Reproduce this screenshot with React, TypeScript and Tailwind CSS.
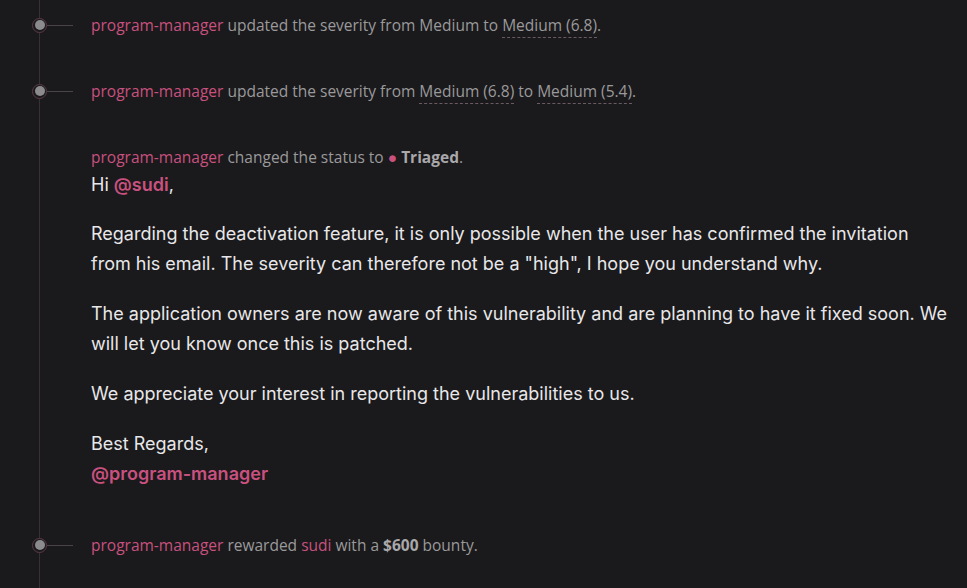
import React from "react";

const pink = "text-[#c9517f]";

function Marker() {
  return (
    <div className="flex items-center -ml-[8px] mr-[18px] shrink-0">
      <div className="w-[15px] h-[15px] rounded-full border border-[#5a3a4a] bg-[#1a191b] flex items-center justify-center">
        <div className="w-[10px] h-[10px] rounded-full bg-[#8b8b8d]" />
      </div>
      <div className="w-[26px] h-px bg-[#4a4448]" />
    </div>
  );
}

function Val({ children }: { children: React.ReactNode }) {
  return (
    <span className="border-b border-dashed border-[#6a5a62] pb-[1px]">{children}</span>
  );
}

function StatusRow({ children, marker = true }: { children: React.ReactNode; marker?: boolean }) {
  return (
    <div className={`flex items-center h-[20px] ${marker ? "" : "pl-[51px]"}`}>
      {marker && <Marker />}
      <div
        className="text-[15.5px] leading-[20px] text-[#9a999b] whitespace-nowrap"
        style={{ fontFamily: '"Open Sans", "Noto Sans", sans-serif' }}
      >
        {children}
      </div>
    </div>
  );
}

export default function App() {
  return (
    <div className="w-[967px] h-[588px] overflow-hidden bg-[#1a191b]">
      <div className="ml-[39px] h-full border-l border-[#3b2f36] pt-[15px] flex flex-col">
        <StatusRow>
          <span className={pink}>program-manager</span> updated the severity from Medium to{" "}
          <Val>Medium (6.8)</Val>.
        </StatusRow>
        <div className="h-[46px]" />
        <StatusRow>
          <span className={pink}>program-manager</span> updated the severity from{" "}
          <Val>Medium (6.8)</Val> to <Val>Medium (5.4)</Val>.
        </StatusRow>
        <div className="h-[46px]" />
        <StatusRow marker={false}>
          <span className={pink}>program-manager</span> changed the status to{" "}
          <span className="text-[#c9517f]">●</span>{" "}
          <span className="font-bold text-[#a9a8aa]">Triaged</span>.
        </StatusRow>
        <div
          className="pl-[51px] pr-[10px] mt-[3px] text-[18px] leading-[30px] text-[#e8e7e9]"
          style={{ fontFamily: 'Inter, "Noto Sans", sans-serif' }}
        >
          <p>
            Hi <span className={`${pink} font-semibold`}>@sudi</span>,
          </p>
          <p className="mt-[19px]">
            Regarding the deactivation feature, it is only possible when the user has confirmed the invitation
            <br />
            from his email. The severity can therefore not be a "high", I hope you understand why.
          </p>
          <p className="mt-[20px]">
            The application owners are now aware of this vulnerability and are planning to have it fixed soon. We
            <br />
            will let you know once this is patched.
          </p>
          <p className="mt-[20px]">We appreciate your interest in reporting the vulnerabilities to us.</p>
          <p className="mt-[20px]">
            Best Regards,
            <br />
            <span className={`${pink} font-semibold`}>@program-manager</span>
          </p>
        </div>
        <div className="h-[46px]" />
        <StatusRow>
          <span className={pink}>program-manager</span> rewarded <span className={pink}>sudi</span> with a{" "}
          <span className="font-bold text-[#a9a8aa]">$600</span> bounty.
        </StatusRow>
      </div>
    </div>
  );
}
